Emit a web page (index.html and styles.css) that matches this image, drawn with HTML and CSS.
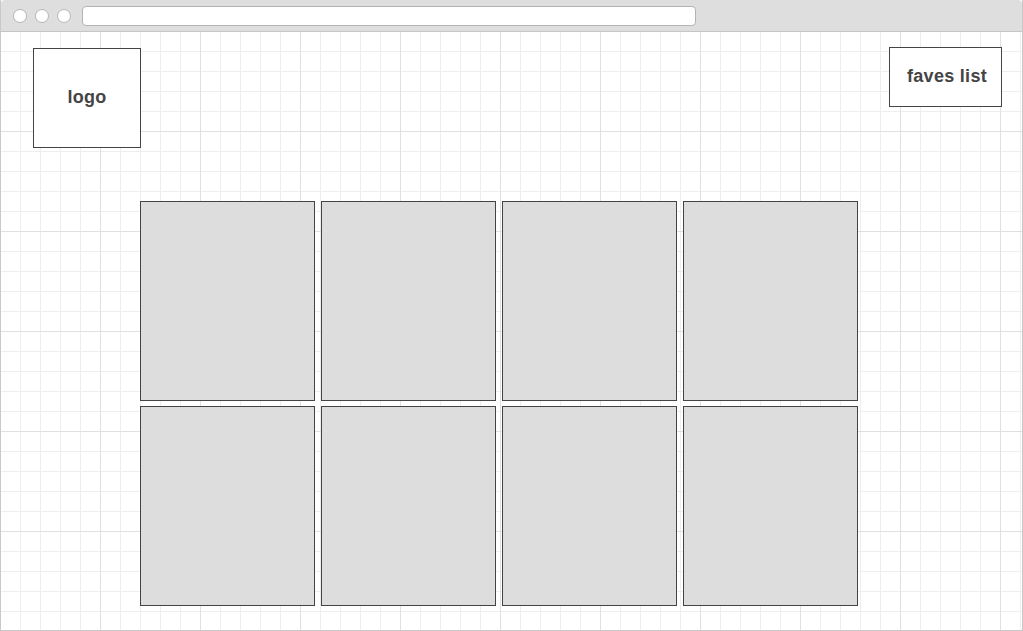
FILE: index.html
```html
<!DOCTYPE html>
<html lang="en">
<head>
<meta charset="utf-8">
<title>Wireframe</title>
<link rel="stylesheet" href="styles.css">
</head>
<body>
<div class="window">
  <div class="chrome">
    <div class="dots"><span class="dot"></span><span class="dot"></span><span class="dot"></span></div>
    <div class="address"></div>
  </div>
  <div class="canvas">
    <header class="top">
      <div class="logo">logo</div>
      <div class="faves">faves list</div>
    </header>
    <main class="grid">
      <div class="card"></div>
      <div class="card"></div>
      <div class="card"></div>
      <div class="card"></div>
      <div class="card"></div>
      <div class="card"></div>
      <div class="card"></div>
      <div class="card"></div>
    </main>
  </div>
</div>
</body>
</html>
```
FILE: styles.css
```css
html, body {
  margin: 0;
  padding: 0;
  background: #ffffff;
}
body {
  width: 1023px;
  height: 631px;
  overflow: hidden;
  font-family: "Liberation Sans", Arial, sans-serif;
}
.window {
  box-sizing: border-box;
  width: 1023px;
  height: 631px;
  border: 1px solid #c9c9c9;
  border-top: none;
  display: flex;
  flex-direction: column;
}
.chrome {
  box-sizing: border-box;
  height: 32px;
  flex: none;
  background: #dedede;
  border-bottom: 1px solid #c6c6c6;
  border-radius: 4px 4px 0 0;
  display: flex;
  align-items: flex-start;
  padding: 6px 0 0 12px;
}
.dots {
  height: 20px;
  display: flex;
  align-items: center;
  gap: 8px;
}
.dot {
  box-sizing: border-box;
  width: 14px;
  height: 14px;
  border-radius: 50%;
  background: #ffffff;
  border: 1px solid #b5b5b5;
}
.address {
  box-sizing: border-box;
  margin-left: 11px;
  width: 614px;
  height: 20px;
  background: #ffffff;
  border: 1px solid #b3b3b3;
  border-radius: 4px;
}
.canvas {
  flex: 1;
  background-color: #ffffff;
  background-image:
    linear-gradient(to right, #e0e0e0 1px, transparent 1px),
    linear-gradient(to bottom, #e0e0e0 1px, transparent 1px),
    linear-gradient(to right, #eeeeee 1px, transparent 1px),
    linear-gradient(to bottom, #eeeeee 1px, transparent 1px);
  background-size: 100px 100px, 100px 100px, 20px 20px, 20px 20px;
  background-position: -1px -1px;
}
.top {
  display: flex;
  justify-content: space-between;
  align-items: flex-start;
  padding: 16px 20px 0 32px;
}
.logo, .faves {
  box-sizing: border-box;
  background: #ffffff;
  border: 1px solid #444444;
  color: #444444;
  font-weight: bold;
  font-size: 18px;
  letter-spacing: 0.3px;
  display: flex;
  align-items: center;
  justify-content: center;
  padding-bottom: 2px;
}
.logo {
  width: 108px;
  height: 100px;
}
.faves {
  width: 113px;
  height: 60px;
  margin-top: -1px;
  padding-left: 3px;
}
.grid {
  display: grid;
  grid-template-columns: repeat(4, 1fr);
  grid-auto-rows: 200px;
  column-gap: 6px;
  row-gap: 5px;
  width: 718px;
  margin: 53px 0 0 139px;
}
.card {
  box-sizing: border-box;
  background: #dddddd;
  border: 1px solid #444444;
}
```
